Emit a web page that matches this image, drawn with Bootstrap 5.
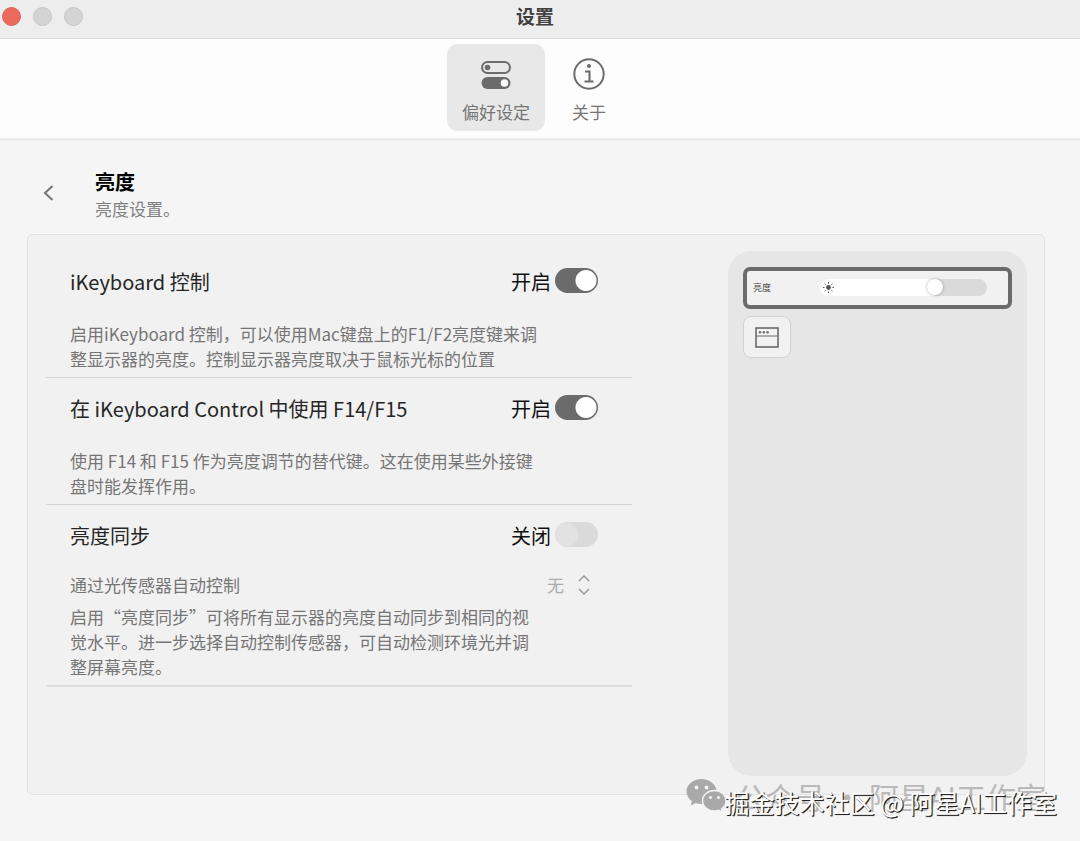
<!DOCTYPE html>
<html lang="zh-CN">
<head>
<meta charset="utf-8">
<meta name="viewport" content="width=device-width, initial-scale=1">
<title>设置</title>
<link href="https://cdn.jsdelivr.net/npm/bootstrap@5.3.0/dist/css/bootstrap.min.css" rel="stylesheet">
<style>
  body { font-family: "Noto Sans CJK SC", sans-serif; font-size: 17px; line-height: 25px; color: #757575; background: #f5f5f5; min-height: 100vh; }
  .titlebar { height: 39px; background: #ededed; border-bottom: 1px solid #d9d9d9; padding-right: 10px; }
  .titlebar h1 { font-size: 19px; line-height: 32px; color: #404040; }
  .lights { left: 2px; top: 7px; gap: 12px; }
  .light { width: 19px; height: 19px; border-radius: 50%; border: 1px solid #c4c4c4; background: #d4d4d4; padding: 0; }
  .light.close-light { background: #ec695e; border-color: #e0625a; }
  .toolbar { background: #fdfdfd; padding: 5px 0 7px; border-bottom: 3px solid #ececec; }
  .tab-btn { border: 0; border-radius: 10px; background: none; color: #757575; padding: 12px 15px 8px; height: 87px; }
  .tab-btn.active { background: #e8e8e8; }
  .tab-btn.about { padding-left: 27px; padding-right: 27px; }
  .tab-btn svg { display: block; margin: 0 auto 7px; }
  .tab-btn span { display: block; }
  .page-head { padding: 27px 0 12px 42px; gap: 39px; }
  .back-btn { border: 0; background: none; padding: 0; margin-bottom: 4px; width: 14px; height: 20px; line-height: 0; }
  .page-head h2 { font-size: 20px; line-height: 28px; color: #000; }
  .page-head p { color: #808080; line-height: 26px; }
  .panel { margin: 0 35px 0 27px; background: #f1f1f1; border: 1px solid #e2e2e2; border-radius: 6px; padding: 16px 17px 18px 18px; gap: 96px; }
  .setting { padding: 16px 34px 6px 24px; border-bottom: 1px solid #d4d4d4; }
  .setting:last-child { border-bottom: 2px solid #dedede; }
  .setting .setting-label { font-size: 20px; line-height: 30px; color: #262626; }
  .setting .state { font-size: 20px; line-height: 30px; color: #111; }
  .desc { max-width: 470px; margin: 24px 0 0; }
  .sensor-row + .desc { margin-top: 7px; }
  .toggle.form-check-input { width: 43px; height: 25px; margin: 1px 0 0; border: 0; background-color: #6b6b6b; border-radius: 13px;
    background-image: radial-gradient(circle at 31px 50%, #fff 10px, transparent 11px); background-position: 0 0; background-size: 100% 100%; }
  .toggle.form-check-input:not(:checked) { background-color: #dadada; background-image: radial-gradient(circle at 12px 50%, #e2e2e2 11px, transparent 12px); }
  .sensor-row { margin-top: 21px; }
  .sensor-row select { appearance: none; border: 0; padding: 0 6px 0 0; width: 51px; line-height: 25px; color: #ababab; opacity: 1;
    background: url("data:image/svg+xml,%3Csvg xmlns='http://www.w3.org/2000/svg' width='12' height='20' fill='none' stroke='%239a9a9a' stroke-width='1.5'%3E%3Cpath d='M1 6l5-5 5 5M1 14l5 5 5-5'/%3E%3C/svg%3E") no-repeat right 8px center; }
  .preview { flex: 0 0 299px; border-radius: 24px; background: #e6e6e6; padding: 16px 15px; min-height: 525px; }
  .slider-box { border: 4px solid #6b6b6b; border-radius: 7px; background: #f1f1f1; height: 42px; padding: 0 21px 2px 6px; font-size: 9px; color: #444; }
  .bright { appearance: none; display: block; width: 167px; height: 17px; margin: 0; border-radius: 9px; background: linear-gradient(to right, #fff 69%, #dadada 69%); }
  .bright::-webkit-slider-thumb { appearance: none; width: 16px; height: 16px; border-radius: 50%; background: #fff; box-shadow: 0 0 3px rgba(0,0,0,.35); }
  .bright::-moz-range-thumb { width: 16px; height: 16px; border: 0; border-radius: 50%; background: #fff; box-shadow: 0 0 3px rgba(0,0,0,.35); }
  .sun { left: 3px; top: 3px; pointer-events: none; }
  .win-btn { width: 48px; height: 42px; margin-top: 7px; border: 1px solid #d2d2d2; border-radius: 8px; background: #f1f1f1; padding: 0; }
  .stamp { pointer-events: none; white-space: nowrap; }
  .stamp-back { right: 34px; bottom: 25px; gap: 10px; font-size: 30px; line-height: 40px; color: #b9b9b9; }
  .stamp-front { right: 23px; bottom: 21px; font-size: 25px; line-height: 36px; color: #fff; text-shadow: 1px 1px 0 #222, 1px 1px 1px #555; }
</style>
</head>
<body class="position-relative">
<header>
  <div class="titlebar position-relative text-center">
    <div class="lights position-absolute d-flex">
      <button class="light close-light" type="button" aria-label="关闭"></button>
      <button class="light" type="button" aria-label="最小化"></button>
      <button class="light" type="button" aria-label="缩放"></button>
    </div>
    <h1 class="fw-bold m-0">设置</h1>
  </div>
  <nav class="toolbar d-flex justify-content-center">
    <button class="tab-btn active" type="button">
      <svg width="32" height="36" viewBox="0 0 32 36" fill="none">
        <rect x="2" y="6" width="28" height="11" rx="5.500" stroke="#6b6b6b" stroke-width="2"/>
        <circle cx="7.500" cy="11.500" r="2.800" fill="#6b6b6b"/>
        <rect x="1.500" y="21" width="29" height="12" rx="6" fill="#6b6b6b"/>
        <circle cx="24.500" cy="27" r="3.800" fill="#fff"/>
      </svg>
      <span>偏好设定</span>
    </button>
    <button class="tab-btn about" type="button">
      <svg width="34" height="36" viewBox="0 0 34 36" fill="none" stroke="#6b6b6b">
        <circle cx="17" cy="18" r="14.700" stroke-width="2"/>
        <circle cx="17" cy="10" r="2" fill="#6b6b6b" stroke="none"/>
        <path d="M13 15.500h4.500v9.500M12.500 25.500h9" stroke-width="2"/>
      </svg>
      <span>关于</span>
    </button>
  </nav>
</header>
<main>
  <div class="page-head d-flex align-items-center">
    <button class="back-btn" type="button" aria-label="返回">
      <svg width="14" height="20" viewBox="0 0 14 20" fill="none" stroke="#757575" stroke-width="2"><path d="M10.500 3L3 10l7.500 7"/></svg>
    </button>
    <div>
      <h2 class="fw-bold m-0">亮度</h2>
      <p class="m-0">亮度设置。</p>
    </div>
  </div>
  <section class="panel d-flex">
    <div class="flex-grow-1">
      <div class="setting">
        <div class="d-flex align-items-start">
          <label class="setting-label me-auto" for="kbd">iKeyboard 控制</label>
          <span class="state me-1">开启</span>
          <input class="form-check-input toggle" type="checkbox" role="switch" id="kbd" checked>
        </div>
        <p class="desc">启用iKeyboard 控制，可以使用Mac键盘上的F1/F2亮度键来调整显示器的亮度。控制显示器亮度取决于鼠标光标的位置</p>
      </div>
      <div class="setting">
        <div class="d-flex align-items-start">
          <label class="setting-label me-auto" for="fkeys">在 iKeyboard Control 中使用 F14/F15</label>
          <span class="state me-1">开启</span>
          <input class="form-check-input toggle" type="checkbox" role="switch" id="fkeys" checked>
        </div>
        <p class="desc">使用 F14 和 F15 作为亮度调节的替代键。这在使用某些外接键盘时能发挥作用。</p>
      </div>
      <div class="setting">
        <div class="d-flex align-items-start">
          <label class="setting-label me-auto" for="sync">亮度同步</label>
          <span class="state me-1">关闭</span>
          <input class="form-check-input toggle" type="checkbox" role="switch" id="sync">
        </div>
        <div class="sensor-row d-flex justify-content-between">
          <label for="sensor">通过光传感器自动控制</label>
          <select id="sensor" disabled><option>无</option></select>
        </div>
        <p class="desc">启用“亮度同步”可将所有显示器的亮度自动同步到相同的视觉水平。进一步选择自动控制传感器，可自动检测环境光并调整屏幕亮度。</p>
      </div>
    </div>
    <aside class="preview mt-auto">
      <div class="slider-box d-flex align-items-center justify-content-between">
        <label for="bright">亮度</label>
        <div class="position-relative">
          <input class="bright" type="range" id="bright" min="0" max="100" value="71">
          <svg class="sun position-absolute" width="11" height="11" viewBox="0 0 11 11" stroke="#555" stroke-width="1">
            <circle cx="5.500" cy="5.500" r="2.400" fill="#555" stroke="none"/>
            <path d="M5.500 0v1.500M5.500 9.500V11M0 5.500h1.500M9.500 5.500H11M1.600 1.600l1 1M8.400 8.400l1 1M1.600 9.400l1-1M8.400 2.600l1-1"/>
          </svg>
        </div>
      </div>
      <button class="win-btn d-flex align-items-center justify-content-center" type="button" aria-label="窗口">
        <svg width="24" height="21" viewBox="0 0 24 21" fill="none" stroke="#6b6b6b">
          <rect x="1" y="1" width="22" height="19" stroke-width="1.600"/>
          <path d="M1 9h22" stroke-width="1"/>
          <g fill="#6b6b6b" stroke="none"><circle cx="5" cy="5.200" r="1.200"/><circle cx="8.800" cy="5.200" r="1.200"/><circle cx="12.600" cy="5.200" r="1.200"/></g>
        </svg>
      </button>
    </aside>
  </section>
</main>
<div class="stamp stamp-back position-absolute d-flex align-items-center">
  <svg width="40" height="36" viewBox="0 0 40 36" fill="#a9a9a9">
    <path d="M15.500 1C7.200 1 .5 6.600.5 13.600c0 3.900 2.100 7.300 5.500 9.600l-1.400 4.300 5-2.500c1.900.6 3.800.9 5.900.9 8.300 0 15-5.500 15-12.300S23.800 1 15.500 1z"/>
    <path d="M28.500 12.500c-6.700 0-12 4.500-12 10.200s5.300 10.300 12 10.300c1.500 0 3-.2 4.300-.7l3.900 2.100-1.100-3.500c2.900-1.900 4.400-4.900 4.400-8.200 0-5.700-4.800-10.200-11.500-10.200z" stroke="#f3f3f3" stroke-width="1.500"/>
    <g fill="#f3f3f3"><circle cx="10.500" cy="9.500" r="1.900"/><circle cx="20.500" cy="9.500" r="1.900"/><circle cx="24.500" cy="19.500" r="1.600"/><circle cx="32.500" cy="19.500" r="1.600"/></g>
  </svg>
  <span>公众号 · 阿星AI工作室</span>
</div>
<div class="stamp stamp-front position-absolute">掘金技术社区 @ 阿星AI工作室</div>
<script src="https://cdn.jsdelivr.net/npm/bootstrap@5.3.0/dist/js/bootstrap.bundle.min.js"></script>
</body>
</html>
